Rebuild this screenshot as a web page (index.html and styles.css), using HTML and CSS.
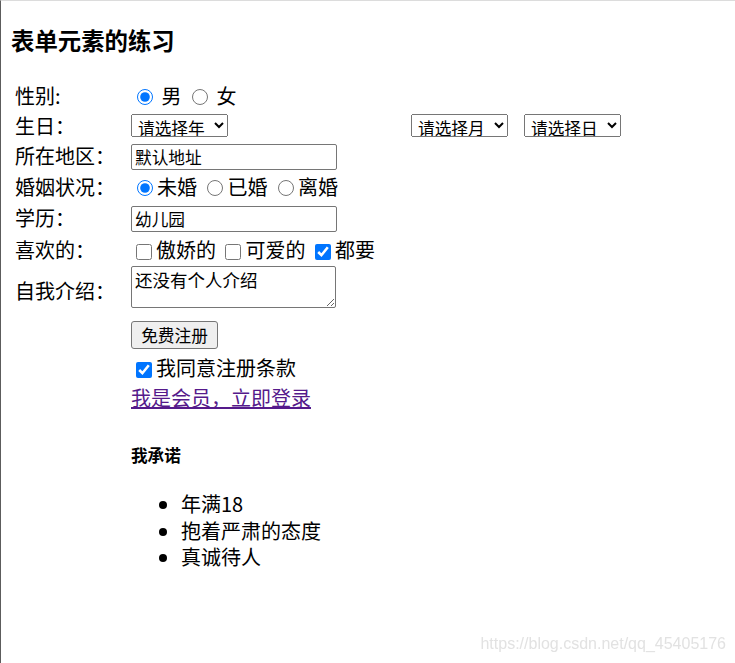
FILE: index.html
```html
<!DOCTYPE html>
<html lang="zh-CN">
<head>
  <meta charset="UTF-8" />
  <meta name="viewport" content="width=device-width, initial-scale=1.0" />
  <title>表单元素的练习</title>
  <link rel="stylesheet" href="styles.css">
</head>
<body>
  <!-- 标题 -->
  <h3 class="title">表单元素的练习</h3>

  <!-- 注册表单 -->
  <form class="form" action="#">
    <div class="row row-gender">
      <label class="label">性别:</label>
      <div class="field">
        <input type="radio" name="sex" checked> 男 <input type="radio" name="sex"> 女
      </div>
    </div>
    <div class="row row-birthday">
      <label class="label">生日：</label>
      <div class="field"><select class="select"><option>请选择年</option></select><select class="select select-month"><option>请选择月</option></select><select class="select select-day"><option>请选择日</option></select></div>
    </div>
    <div class="row row-input">
      <label class="label">所在地区：</label>
      <div class="field"><input class="text" type="text" value="默认地址"></div>
    </div>
    <div class="row row-marriage">
      <label class="label">婚姻状况：</label>
      <div class="field">
        <input type="radio" name="marry" checked>未婚 <input type="radio" name="marry">已婚 <input type="radio" name="marry">离婚
      </div>
    </div>
    <div class="row row-input">
      <label class="label">学历：</label>
      <div class="field"><input class="text" type="text" value="幼儿园"></div>
    </div>
    <div class="row row-input">
      <label class="label">喜欢的：</label>
      <div class="field">
        <input type="checkbox">傲娇的 <input type="checkbox">可爱的 <input type="checkbox" checked>都要
      </div>
    </div>
    <div class="row row-intro">
      <label class="label">自我介绍：</label>
      <div class="field"><textarea class="intro">还没有个人介绍</textarea></div>
    </div>
    <div class="row row-submit">
      <div class="label"></div>
      <div class="field"><button class="btn" type="button">免费注册</button></div>
    </div>
    <div class="row row-agree">
      <div class="label"></div>
      <div class="field"><input type="checkbox" checked>我同意注册条款</div>
    </div>
    <div class="row row-link">
      <div class="label"></div>
      <div class="field"><a class="link" href="#">我是会员，立即登录</a></div>
    </div>

    <!-- 承诺 -->
    <div class="promise">
      <h5 class="promise-title">我承诺</h5>
      <ul class="promise-list">
        <li>年满18</li>
        <li>抱着严肃的态度</li>
        <li>真诚待人</li>
      </ul>
    </div>
  </form>

  <div class="watermark">https://blog.csdn.net/qq_45405176</div>
</body>
</html>
```

FILE: styles.css
```css
/* ===== 页面 ===== */
html {
  height: 100%;
  box-sizing: border-box;
  border-top: 1px solid #dcdcdc;
  border-left: 1px solid #5c5c5c;
}
body {
  margin: 0;
  padding: 0 10px;
  font-family: "Noto Sans CJK SC", sans-serif;
  font-size: 20px;
  line-height: 26px;
  color: #000;
  background: #fff;
}
.title {
  margin: 24px 0;
  font-size: 23.4px;
  line-height: 31px;
  font-weight: bold;
}

/* ===== 表单行 ===== */
.row {
  display: flex;
  align-items: center;
  padding-left: 4px;
  height: 32px;
}
.row-gender { height: 31px; }
.row-birthday { height: 29px; }
.row-marriage { height: 30px; }
.row-intro { height: 50px; }
.row-submit { height: 36px; }
.row-link { height: 28px; }
.label {
  flex: none;
  width: 116px;
}
.field {
  flex: 1;
  white-space: nowrap;
}
.row-intro .field {
  align-self: flex-start;
}

/* ===== 控件 ===== */
input, select, textarea, button {
  font-family: "Noto Sans CJK SC", sans-serif;
  font-size: 16.7px;
  color: #000;
}
input[type="radio"] {
  width: 16px;
  height: 16px;
  margin: 0 4px 0 6px;
  vertical-align: -1px;
}
input[type="checkbox"] {
  width: 16px;
  height: 16px;
  margin: 0 4px 0 5px;
  vertical-align: -2px;
}
.select {
  width: 97px;
  height: 23px;
  margin-top: 1px;
  padding: 0 0 0 2px;
  vertical-align: top;
}
.select-month { margin-left: 183px; }
.select-day { margin-left: 16px; }
.text {
  box-sizing: border-box;
  width: 206px;
  height: 26px;
  padding: 0 3px;
  border: 1px solid #767676;
  border-radius: 2px;
  vertical-align: middle;
}
.intro {
  display: block;
  box-sizing: border-box;
  width: 205px;
  height: 42px;
  padding: 2px 3px;
  border: 1px solid #767676;
  border-radius: 2px;
  font-size: 17.5px;
  line-height: 22px;
}
.btn {
  width: 87px;
  height: 28px;
  padding: 0;
  border: 1px solid #767676;
  border-radius: 3px;
  background: #efefef;
  vertical-align: middle;
}
.link {
  color: #551a8b;
  text-decoration: underline;
}

/* ===== 我承诺 ===== */
.promise {
  margin-left: 120px;
}
.promise-title {
  margin: 32px 0 0;
  font-size: 16.6px;
  line-height: 22px;
  font-weight: bold;
}
.promise-list {
  margin: 25px 0 0;
  padding-left: 50px;
}
.promise-list li {
  line-height: 26.5px;
}

/* 右下角水印 */
.watermark {
  position: fixed;
  right: 9px;
  bottom: 10px;
  font-family: "Liberation Sans", Arial, sans-serif;
  font-size: 16px;
  line-height: 18px;
  color: #e2e2e2;
}
```
